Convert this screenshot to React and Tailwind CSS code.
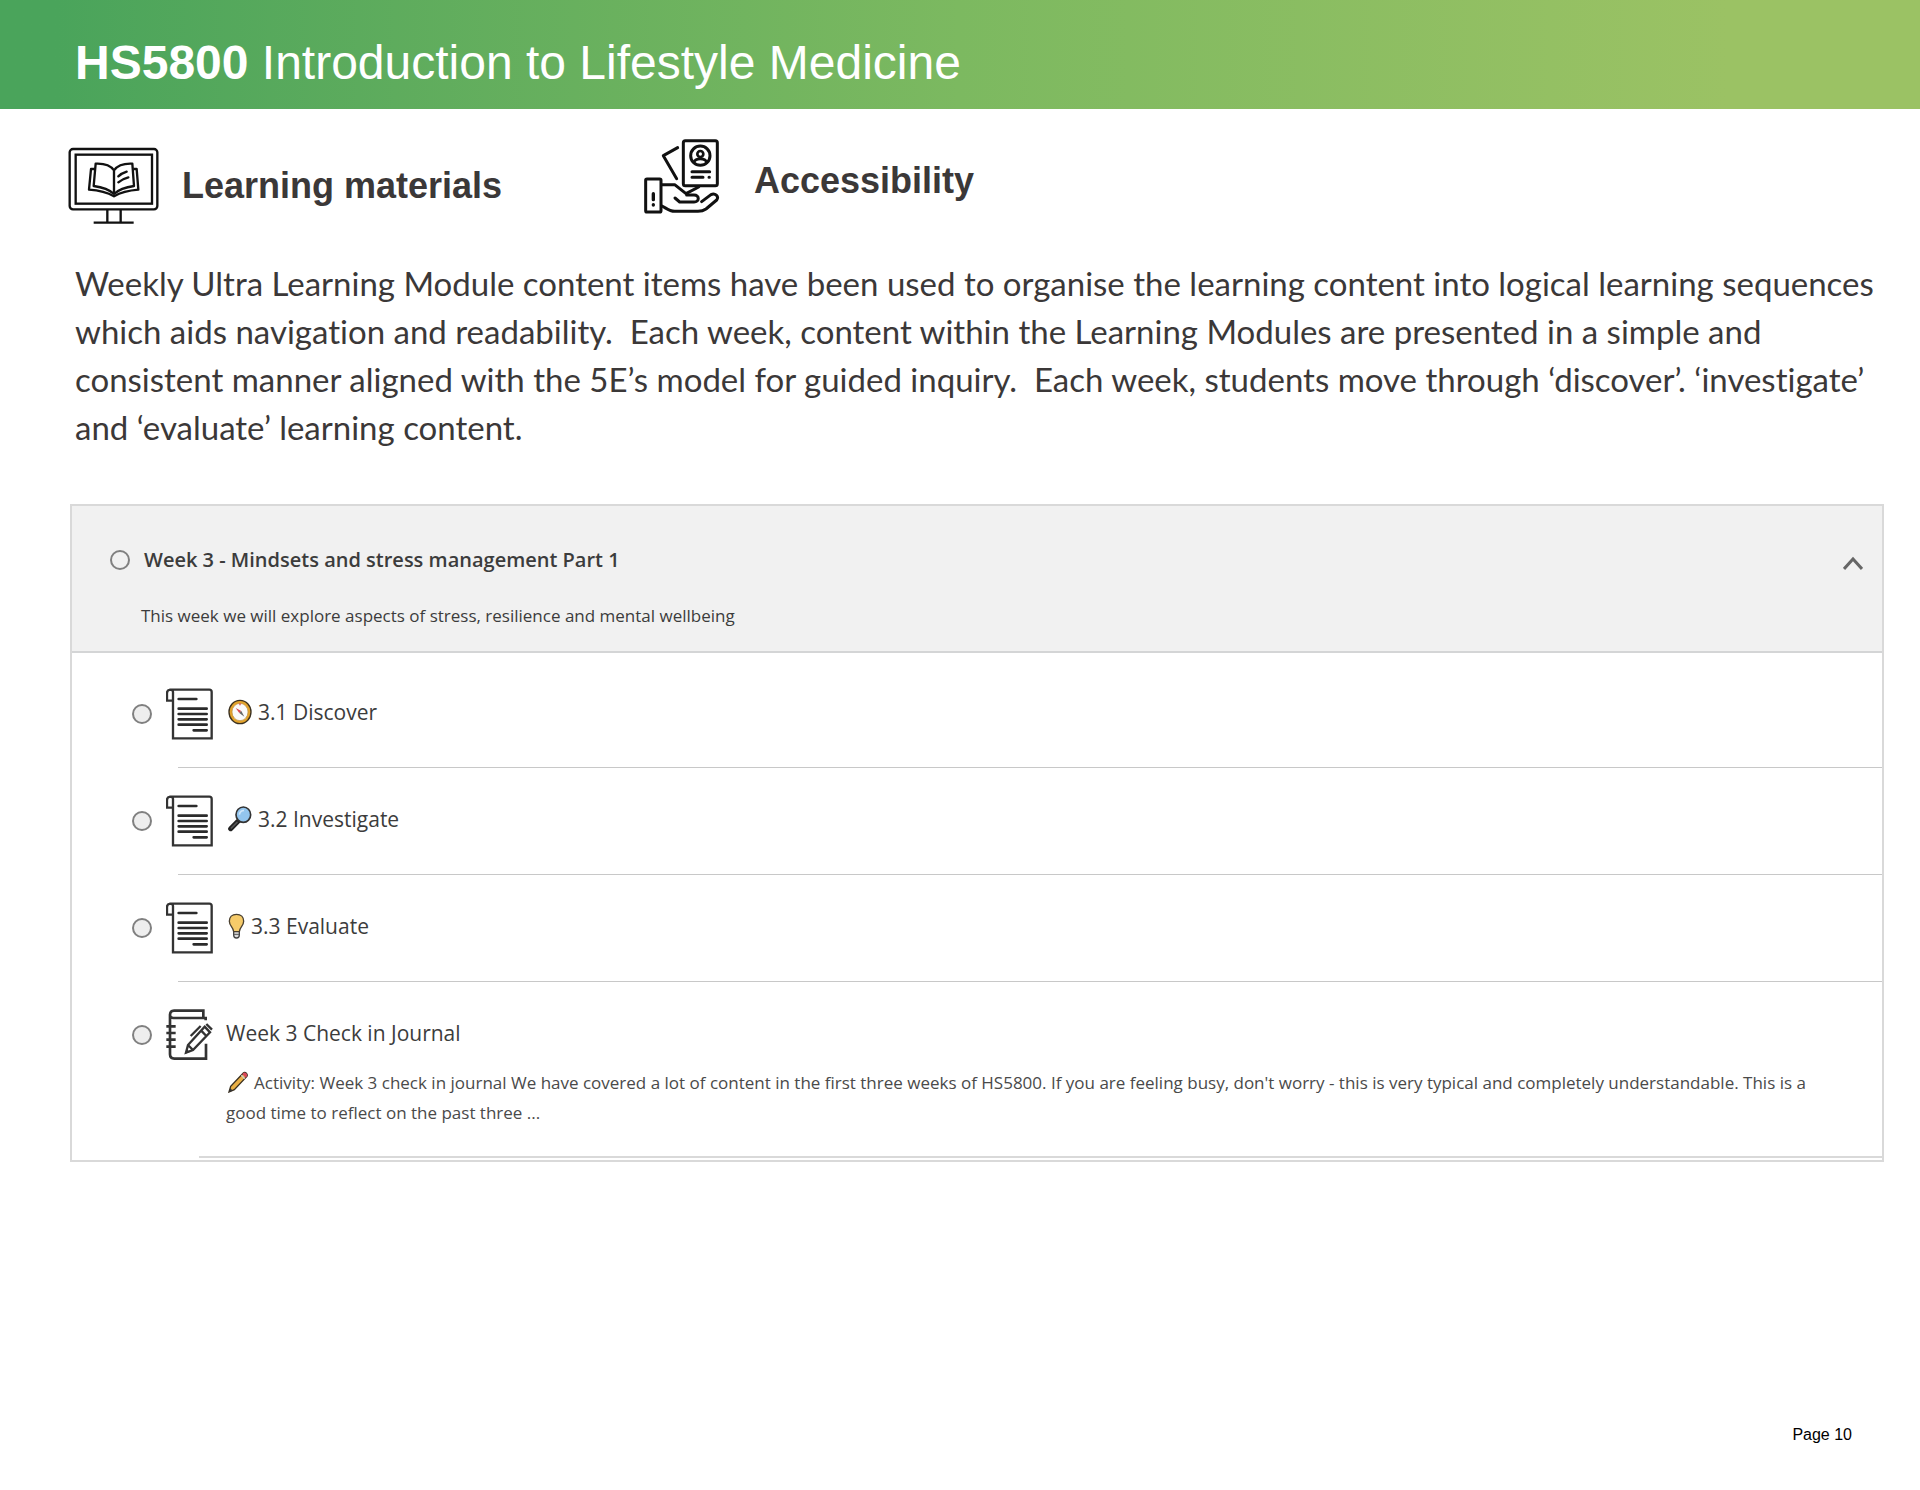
import { useState } from 'react'

function MonitorIcon({ className }) {
  return (
    <svg className={className} viewBox="54 50 273 234" fill="none" stroke="#111" strokeWidth="7" aria-hidden="true">
      <rect x="59" y="56" width="263" height="181" rx="10" />
      <rect x="77" y="73" width="229" height="147" />
      <path d="M172 238v38M212 238v38M131 277h120" />
      <path
        d="M192 120C180 103 158 99 137 100L131 167C154 170 176 176 192 191C208 176 230 170 252 167L247 100C226 99 204 103 192 120ZM192 120V190"
        strokeLinejoin="round"
      />
      <path d="M134 116H123L117 178C144 180 168 184 192 198C216 184 240 180 265 178L260 116H250" strokeLinejoin="round" />
      <path d="M205 138Q214 129 230 124M205 156Q216 146 235 141" strokeLinecap="round" />
    </svg>
  )
}

function HandCardIcon({ className }) {
  return (
    <svg
      className={className}
      viewBox="42 42 228 225"
      fill="none"
      stroke="#111"
      strokeWidth="9"
      strokeLinecap="round"
      strokeLinejoin="round"
      aria-hidden="true"
    >
      <rect x="160" y="47" width="102" height="135" rx="6" />
      <circle cx="211" cy="92" r="29" />
      <circle cx="211" cy="87" r="9" strokeWidth="8" />
      <path d="M192 113C194 98 228 98 230 113" strokeWidth="8" />
      <path d="M186 140H239M186 157H219M237 157H238" />
      <path d="M143 68L100 92L140 161" />
      <rect x="47" y="162" width="46" height="99" rx="4" />
      <path d="M70 206V224M70 239V240" strokeWidth="10" />
      <path d="M95 179H134L168 206L206 186" />
      <path d="M135 219L149 231H192C209 231 209 210 192 210H170" />
      <path d="M215 230L243 209C255 203 268 214 260 225L228 252C221 257 213 259 204 259H134C118 259 108 249 96 243" />
    </svg>
  )
}

function DocumentIcon() {
  return (
    <svg className="h-[52px] w-[47px] shrink-0" viewBox="0 0 141 156" fill="none" stroke="#333" strokeWidth="7" aria-hidden="true">
      <path d="M12 5H130Q137 5 137 12V151H21V12Q21 5 12 5Q3 6 3 15V38H21" />
      <g stroke="#2b2b2b" strokeWidth="8" strokeLinecap="round">
        <path d="M38 33H91M38 62H122M38 78H122M38 94H122M38 110H122M83 127H122" />
      </g>
    </svg>
  )
}

function JournalIcon() {
  return (
    <svg className="h-[52px] w-[47px] shrink-0" viewBox="0 0 141 156" fill="none" stroke="#333" strokeWidth="8" aria-hidden="true">
      <path d="M119 34V27H22Q12 27 12 19Q12 5 24 5H112V27M12 16V136Q12 149 25 149H120V104" />
      <path d="M1 52H29M1 72H29M1 92H29M1 113H29" />
      <path d="M116 53L132 70L81 123L60 131L66 108ZM66 108L81 123M105 64L121 81" strokeWidth="7" />
      <path d="M74 81L104 51M121 45L138 62" strokeWidth="7" />
      <path d="M58 134L62 120L71 129Z" fill="#333" stroke="none" />
    </svg>
  )
}

function CompassIcon() {
  return (
    <svg className="h-[26px] w-6 shrink-0" viewBox="0 0 72 78" aria-hidden="true">
      <ellipse cx="36" cy="39" rx="33" ry="35" fill="#e3a32b" stroke="#3a3020" strokeWidth="4" />
      <ellipse cx="36" cy="39" rx="24" ry="26" fill="#fafafa" stroke="#b98a3a" strokeWidth="2" />
      <path d="M23 27L40 36L34 42Z" fill="#d8434e" />
      <path d="M49 53L40 36L34 42Z" fill="#666" />
      <path d="M36 13V19" stroke="#d8434e" strokeWidth="4" />
    </svg>
  )
}

function MagnifierIcon() {
  return (
    <svg className="h-[26px] w-6 shrink-0" viewBox="0 0 72 78" aria-hidden="true">
      <path d="M8 68L30 46" stroke="#222" strokeWidth="15" strokeLinecap="round" />
      <path d="M10 66L27 49" stroke="#555" strokeWidth="5" strokeLinecap="round" />
      <ellipse cx="46" cy="26" rx="22" ry="23" fill="#93c5ee" stroke="#333" strokeWidth="5" />
      <path d="M34 26Q36 14 48 13" stroke="#cfe6fa" strokeWidth="5" fill="none" />
    </svg>
  )
}

function BulbIcon() {
  return (
    <svg className="h-[26px] w-[17px] shrink-0" viewBox="0 0 51 78" aria-hidden="true">
      <path d="M17 54H34V66Q34 75 25.5 75Q17 75 17 66Z" fill="#ddd" stroke="#444" strokeWidth="4" />
      <path
        d="M25.5 4C12 4 4 13 4 25C4 39 16 42 17 56H34C35 42 47 39 47 25C47 13 39 4 25.5 4Z"
        fill="#f6cb6a"
        stroke="#4a4030"
        strokeWidth="4"
      />
      <path d="M18 64H33" stroke="#555" strokeWidth="3" />
    </svg>
  )
}

function PencilIcon() {
  return (
    <svg className="mr-[6px] ml-[2px] inline-block h-[22px] w-5 align-[-4px]" viewBox="0 0 60 66" aria-hidden="true">
      <path d="M3 63L8 46L46 6Q50 2 55 7Q60 12 56 17L19 56Z" fill="#eab045" stroke="#3a3020" strokeWidth="4" />
      <path d="M43 9L46 6Q50 2 55 7Q60 12 56 17L53 20Z" fill="#d9475a" />
      <path d="M40 13L50 23" stroke="#ccc" strokeWidth="4" />
      <path d="M3 63L7 51L14 59Z" fill="#333" />
    </svg>
  )
}

const items = [
  { id: 'discover', title: '3.1 Discover', icon: CompassIcon },
  { id: 'investigate', title: '3.2 Investigate', icon: MagnifierIcon },
  { id: 'evaluate', title: '3.3 Evaluate', icon: BulbIcon },
]

const radioClass =
  'size-5 shrink-0 appearance-none rounded-full border-2 border-[#808080] checked:border-[6px] checked:border-[#444]'

export default function App() {
  const [open, setOpen] = useState(true)

  return (
    <div className="flex min-h-screen flex-col bg-white font-['Liberation_Sans',Arial,sans-serif] text-[#3b3838]">
      <header className="bg-linear-to-r from-[#4aa45b] from-3% via-[#7cb960] via-50% to-[#9bc264] to-90% px-[75px] pt-[35px] pb-[18px]">
        <h1 className="text-[48px] leading-14 text-white">
          <b>HS5800</b> Introduction to Lifestyle Medicine
        </h1>
      </header>

      <main className="flex-1 pr-9 pl-[68px]">
        <div className="flex items-start pt-[30px]">
          <div className="flex w-[576px] items-center gap-[23px] pt-2">
            <MonitorIcon className="h-[78px] w-[91px]" />
            <h2 className="text-[36px] leading-10 font-bold">Learning materials</h2>
          </div>
          <div className="flex items-center gap-[34px]">
            <HandCardIcon className="h-[75px] w-[76px]" />
            <h2 className="pt-2 text-[36px] leading-10 font-bold">Accessibility</h2>
          </div>
        </div>

        <p className="mt-[34px] pl-[7px] font-['Lato',sans-serif] text-[33px] leading-12 [font-variant-ligatures:none]">
          Weekly Ultra Learning Module content items have been used to organise the learning content into logical learning sequences
          <br />
          which aids navigation and readability.&nbsp; Each week, content within the Learning Modules are presented in a simple and
          <br />
          consistent manner aligned with the 5E’s model for guided inquiry.&nbsp; Each week, students move through ‘discover’. ‘investigate’
          <br />
          and ‘evaluate’ learning content.
        </p>

        <section className="mt-[53px] ml-[2px] border-2 border-[#d9d9d9] font-['Open_Sans',sans-serif] text-[#3c3c3c]">
          <div className="flex h-[147px] items-start justify-between border-b-2 border-[#d4d5d6] bg-[#f1f1f1] pt-[38px] pr-[15px] pl-[38px]">
            <div>
              <label className="flex items-center gap-[14px] text-[20px] leading-8 font-semibold">
                <input type="radio" name="progress" className={radioClass} />
                Week 3 - Mindsets and stress management Part 1
              </label>
              <p className="mt-6 pl-[31px] text-[17px] leading-8">
                This week we will explore aspects of stress, resilience and mental wellbeing
              </p>
            </div>
            <button type="button" aria-label="Toggle week 3" aria-expanded={open} onClick={() => setOpen(!open)} className="p-1 pt-3">
              <svg className="h-[15px] w-5" viewBox="0 0 20 15" fill="none" stroke="#666" strokeWidth="3" aria-hidden="true">
                <path d="M1 13L10 3L19 13" />
              </svg>
            </button>
          </div>

          {open && (
            <ul className="pt-2 pb-[2px]">
              {items.map(({ id, title, icon: Icon }) => (
                <li key={id}>
                  <label className="flex h-[106px] items-center pl-[60px] text-[21px] leading-8">
                    <input type="radio" name="progress" className={`${radioClass} mr-[14px] bg-[#eee]`} />
                    <DocumentIcon />
                    <span className="ml-[15px] flex items-center gap-[6px] pb-1">
                      <Icon />
                      {title}
                    </span>
                  </label>
                  <div className="ml-[106px] h-px bg-[#c8c8c8]" />
                </li>
              ))}
              <li>
                <label className="flex h-[106px] items-center pl-[60px] text-[21px] leading-8">
                  <input type="radio" name="progress" className={`${radioClass} mr-[14px] bg-[#eee]`} />
                  <JournalIcon />
                  <span className="ml-[13px] pb-1">Week 3 Check in Journal</span>
                </label>
                <p className="-mt-5 mb-7 pr-14 pl-[154px] text-[17px] leading-[30px] text-[#4a4a4a]">
                  <PencilIcon />
                  Activity: Week 3 check in journal We have covered a lot of content in the first three weeks of HS5800. If you are feeling
                  busy, don't worry - this is very typical and completely understandable. This is a good time to reflect on the past three ...
                </p>
                <div className="ml-[127px] h-[2px] bg-[#d9d9d9]" />
              </li>
            </ul>
          )}
        </section>
      </main>

      <footer className="pr-[68px] pb-[45px] text-right text-base leading-5 text-black">Page 10</footer>
    </div>
  )
}
